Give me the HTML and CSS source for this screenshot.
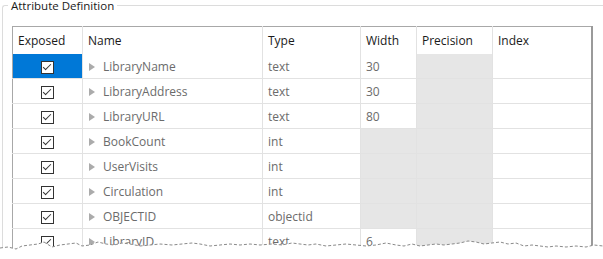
FILE: index.html
```html
<!DOCTYPE html>
<html lang="en">
<head>
    <meta charset="UTF-8">
    <title>Attribute Definition</title>
    <link rel="stylesheet" href="styles.css">
</head>
<body>
    <div class="group">
        <div class="group-title">Attribute Definition</div>
        <table class="grid">
            <thead>
                <tr>
                    <th class="c-exp">Exposed</th>
                    <th class="c-name">Name</th>
                    <th class="c-type">Type</th>
                    <th class="c-width">Width</th>
                    <th class="c-prec">Precision</th>
                    <th class="c-index">Index</th>
                </tr>
            </thead>
            <tbody>
                <tr>
                    <td class="chk selected"><span class="box"></span></td>
                    <td><span class="tri"></span>LibraryName</td>
                    <td>text</td>
                    <td>30</td>
                    <td class="off"></td>
                    <td></td>
                </tr>
                <tr>
                    <td class="chk"><span class="box"></span></td>
                    <td><span class="tri"></span>LibraryAddress</td>
                    <td>text</td>
                    <td>30</td>
                    <td class="off"></td>
                    <td></td>
                </tr>
                <tr>
                    <td class="chk"><span class="box"></span></td>
                    <td><span class="tri"></span>LibraryURL</td>
                    <td>text</td>
                    <td>80</td>
                    <td class="off"></td>
                    <td></td>
                </tr>
                <tr>
                    <td class="chk"><span class="box"></span></td>
                    <td><span class="tri"></span>BookCount</td>
                    <td>int</td>
                    <td class="off"></td>
                    <td class="off"></td>
                    <td></td>
                </tr>
                <tr>
                    <td class="chk"><span class="box"></span></td>
                    <td><span class="tri"></span>UserVisits</td>
                    <td>int</td>
                    <td class="off"></td>
                    <td class="off"></td>
                    <td></td>
                </tr>
                <tr>
                    <td class="chk"><span class="box"></span></td>
                    <td><span class="tri"></span>Circulation</td>
                    <td>int</td>
                    <td class="off"></td>
                    <td class="off"></td>
                    <td></td>
                </tr>
                <tr>
                    <td class="chk"><span class="box"></span></td>
                    <td><span class="tri"></span>OBJECTID</td>
                    <td>objectid</td>
                    <td class="off"></td>
                    <td class="off"></td>
                    <td></td>
                </tr>
                <tr>
                    <td class="chk"><span class="box"></span></td>
                    <td><span class="tri"></span>LibraryID</td>
                    <td>text</td>
                    <td>6</td>
                    <td class="off"></td>
                    <td></td>
                </tr>
            </tbody>
        </table>
    </div>

    <!-- torn paper edge over the bottom of the grid -->
    <svg class="torn" width="603" height="30" viewBox="0 0 603 30">
        <path class="paper" d="M0 12 L8 11 L16 13 L22 10 L30 9 L38 8 L44 6 L52 11 L60 9 L68 8 L76 7 L82 10 L90 9 L98 6 L106 8 L114 9 L122 7 L130 8 L140 10 L150 9 L160 8 L172 9 L182 8 L192 7 L200 8 L210 10 L220 9 L230 8 L240 9 L250 8 L260 9 L272 8 L282 9 L292 7 L300 8 L308 9 L316 8 L326 10 L336 9 L346 8 L356 9 L366 10 L376 9 L386 7 L396 9 L404 10 L412 8 L420 10 L428 9 L436 8 L444 9 L452 8 L460 7 L468 5 L476 6 L484 8 L492 7 L500 6 L508 8 L516 7 L524 10 L532 9 L540 10 L548 11 L556 10 L566 11 L576 10 L586 11 L594 9 L603 10 L603 30 L0 30 Z"/>
        <path class="edge" d="M0 12 L8 11 L16 13 L22 10 L30 9 L38 8 L44 6 L52 11 L60 9 L68 8 L76 7 L82 10 L90 9 L98 6 L106 8 L114 9 L122 7 L130 8 L140 10 L150 9 L160 8 L172 9 L182 8 L192 7 L200 8 L210 10 L220 9 L230 8 L240 9 L250 8 L260 9 L272 8 L282 9 L292 7 L300 8 L308 9 L316 8 L326 10 L336 9 L346 8 L356 9 L366 10 L376 9 L386 7 L396 9 L404 10 L412 8 L420 10 L428 9 L436 8 L444 9 L452 8 L460 7 L468 5 L476 6 L484 8 L492 7 L500 6 L508 8 L516 7 L524 10 L532 9 L540 10 L548 11 L556 10 L566 11 L576 10 L586 11 L594 9 L603 10"/>
    </svg>
</body>
</html>
```

FILE: styles.css
```css
html, body {
    margin: 0;
    height: 259px;
    overflow: hidden;
    background: #fff;
}
body {
    position: relative;
    font-family: "Open Sans", "Noto Sans", sans-serif;
    font-size: 12px;
}
.group {
    margin: 5px 0 0 2px;
    border-top: 1px solid #dcdcdc;
    border-left: 1px solid #dcdcdc;
    border-top-left-radius: 3px;
    padding: 20px 0 0 9px;
    position: relative;
}
.group-title {
    position: absolute;
    top: -6px;
    left: 5px;
    padding: 0 3px;
    background: #fff;
    color: #1a1a1a;
    line-height: 12px;
    font-size: 11.5px;
}
.grid {
    border-collapse: collapse;
    table-layout: fixed;
    width: 581px;
    border-top: 1px solid #a8a8a8;
    border-left: 1px solid #a8a8a8;
    border-right: 2px solid #9a9a9a;
}
.grid th {
    height: 27px;
    padding: 0 0 0 5px;
    text-align: left;
    font-weight: normal;
    color: #1a1a1a;
    border-right: 1px solid #e2e2e2;
    white-space: nowrap;
}
.grid td {
    height: 24px;
    padding: 0 0 0 5px;
    color: #6b6b6b;
    border-right: 1px solid #e2e2e2;
    border-bottom: 1px solid #e2e2e2;
    white-space: nowrap;
}
.c-exp { width: 64px; }
.c-name { width: 174px; }
.c-type { width: 92px; }
.c-width { width: 50px; }
.c-prec { width: 70px; }
.grid th.c-index { border-right: none; }
.grid td:last-child { border-right: none; }
.grid td.off {
    background: #e6e6e6;
}
.grid td.chk {
    padding: 0;
    text-align: center;
}
.grid td.selected {
    background: #0078d7;
}
.box {
    display: inline-block;
    width: 11px;
    height: 11px;
    border: 1px solid #333;
    background: #fff;
    position: relative;
    vertical-align: middle;
}
.box::after {
    content: "";
    position: absolute;
    left: 3px;
    top: 0px;
    width: 3px;
    height: 7px;
    border-right: 1.2px solid #333;
    border-bottom: 1.2px solid #333;
    transform: rotate(45deg);
}
.tri {
    display: inline-block;
    width: 0;
    height: 0;
    border-top: 4px solid transparent;
    border-bottom: 4px solid transparent;
    border-left: 6px solid #ababab;
    margin: 0 8px 0 1px;
    vertical-align: middle;
}
.torn {
    position: absolute;
    left: 0;
    top: 236px;
}
.paper {
    fill: #fff;
}
.edge {
    fill: none;
    stroke: #8a8a8a;
    stroke-width: 1;
    stroke-dasharray: 3 2;
}
```
